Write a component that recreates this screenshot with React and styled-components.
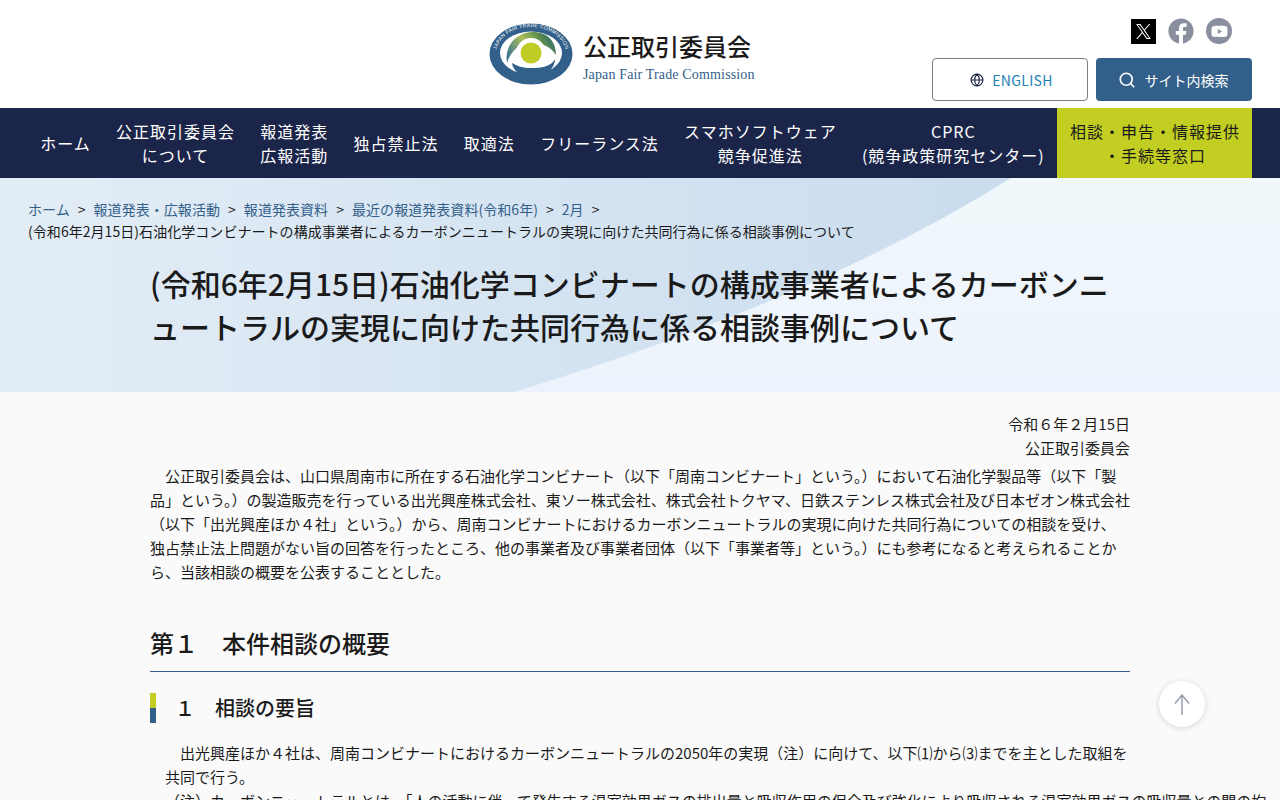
import React from "react";
import styled, { createGlobalStyle } from "styled-components";
import { FaFacebook, FaYoutube } from "react-icons/fa";
import { Globe, Search } from "lucide-react";

const GlobalStyle = createGlobalStyle`
  html, body { margin: 0; padding: 0; height: 800px; overflow: hidden; }
  body {
    background: #fafafa;
    color: #1a1a1a;
    font-family: "Noto Sans CJK JP", "Noto Sans", sans-serif;
  }
`;

const navItems = [
  ["ホーム"],
  ["公正取引委員会", "について"],
  ["報道発表", "広報活動"],
  ["独占禁止法"],
  ["取適法"],
  ["フリーランス法"],
  ["スマホソフトウェア", "競争促進法"],
  ["CPRC", "(競争政策研究センター)"],
];

const crumbs = ["ホーム", "報道発表・広報活動", "報道発表資料", "最近の報道発表資料(令和6年)", "2月"];

export default function App() {
  return (
    <Page>
      <GlobalStyle />
      <Header>
        <Logo>
          <svg width="84" height="62" viewBox="0 0 84 62">
            <defs>
              <linearGradient id="swirl" x1="0" y1="0.7" x2="1" y2="0.3">
                <stop offset="0" stopColor="#3f7590" />
                <stop offset="0.45" stopColor="#a9c058" />
                <stop offset="0.75" stopColor="#5f8f4e" />
                <stop offset="1" stopColor="#2f6a6c" />
              </linearGradient>
              <path id="logoArc" d="M6 33C8 14 24 4 42 4s34 10 36 29" />
            </defs>
            <ellipse cx="42" cy="31" rx="41.5" ry="30.5" fill="#33608a" />
            <ellipse cx="42" cy="30" rx="31" ry="21.5" fill="#fff" />
            <path d="M18 40C15 22 28 9 44 9c14 0 23 9 23 23-5-8-13-12-25-12-12 0-20 8-24 20z" fill="url(#swirl)" />
            <path d="M66 36c-4 8-14 9-24 9-8 0-14-2-19-5 1 6 5 10 11 13h18c8-3 14-9 14-17z" fill="#33608a" />
            <circle cx="42" cy="30" r="15" fill="#fff" />
            <circle cx="42" cy="30" r="10.5" fill="#bfcc28" />
            <LogoArcText>
              <textPath href="#logoArc" startOffset="50%" textAnchor="middle">JAPAN FAIR TRADE COMMISSION</textPath>
            </LogoArcText>
          </svg>
          <LogoText>
            <LogoTitle>公正取引委員会</LogoTitle>
            <LogoSub>Japan Fair Trade Commission</LogoSub>
          </LogoText>
        </Logo>
        <HeaderRight>
          <Socials>
            <XIcon>
              <svg width="15" height="15" viewBox="0 0 24 24" fill="#fff">
                <path d="M14.234 10.162 22.977 0h-2.072l-7.591 8.824L7.251 0H.258l9.168 13.343L.258 24H2.33l8.016-9.318L16.749 24h6.993zm-2.837 3.299-.929-1.329L3.076 1.56h3.182l5.965 8.532.929 1.329 7.754 11.09h-3.182z" />
              </svg>
            </XIcon>
            <FaFacebook size={26} color="#8a8fa0" />
            <RoundIcon><FaYoutube size={17} /></RoundIcon>
          </Socials>
          <Buttons>
            <EnglishButton>
              <Globe size={14} color="#1d2649" />
              ENGLISH
            </EnglishButton>
            <SearchButton>
              <Search size={18} strokeWidth={2.2} />
              サイト内検索
            </SearchButton>
          </Buttons>
        </HeaderRight>
      </Header>

      <Nav>
        {navItems.map((lines) => (
          <NavItem key={lines[0]}>
            {lines.map((l) => <span key={l}>{l}</span>)}
          </NavItem>
        ))}
        <NavAccent>
          <span>相談・申告・情報提供</span>
          <span>・手続等窓口</span>
        </NavAccent>
      </Nav>

      <Hero>
        <Breadcrumb>
          {crumbs.map((c) => (
            <React.Fragment key={c}>
              <Crumb>{c}</Crumb>
              <Sep>&gt;</Sep>
            </React.Fragment>
          ))}
          <Current>(令和6年2月15日)石油化学コンビナートの構成事業者によるカーボンニュートラルの実現に向けた共同行為に係る相談事例について</Current>
        </Breadcrumb>
        <Title>(令和6年2月15日)石油化学コンビナートの構成事業者によるカーボンニュートラルの実現に向けた共同行為に係る相談事例について</Title>
      </Hero>

      <Main>
        <RightLine>令和６年２月15日</RightLine>
        <RightLine>公正取引委員会</RightLine>
        <Lead>
          公正取引委員会は、山口県周南市に所在する石油化学コンビナート（以下「周南コンビナート」という。）において石油化学製品等（以下「製品」という。）の製造販売を行っている出光興産株式会社、東ソー株式会社、株式会社トクヤマ、日鉄ステンレス株式会社及び日本ゼオン株式会社（以下「出光興産ほか４社」という。）から、周南コンビナートにおけるカーボンニュートラルの実現に向けた共同行為についての相談を受け、<br />独占禁止法上問題がない旨の回答を行ったところ、他の事業者及び事業者団体（以下「事業者等」という。）にも参考になると考えられることから、当該相談の概要を公表することとした。
        </Lead>
        <H2>第１　本件相談の概要</H2>
        <H3>１　相談の要旨</H3>
        <Body>
          出光興産ほか４社は、周南コンビナートにおけるカーボンニュートラルの2050年の実現（注）に向けて、以下⑴から⑶までを主とした取組を共同で行う。
        </Body>
        <Note>（注）カーボンニュートラルとは、「人の活動に伴って発生する温室効果ガスの排出量と吸収作用の保全及び強化により吸収される温室効果ガスの吸収量との間の均</Note>
      </Main>

      <TopButton aria-label="ページ上部へ">
        <svg width="16" height="21" viewBox="0 0 16 21" fill="none" stroke="#9a9fb0" strokeWidth="1.5">
          <path d="M8 1V21M1 9.5L8 1l7 8.5" />
        </svg>
      </TopButton>
    </Page>
  );
}

const Page = styled.div`
  width: 1280px;
  height: 800px;
  overflow: hidden;
  position: relative;
`;

const Header = styled.header`
  height: 108px;
  background: #fff;
  box-sizing: border-box;
  padding: 0 28px 0 489px;
  display: flex;
  justify-content: space-between;
`;

const Logo = styled.div`
  display: flex;
  align-items: center;
  gap: 10px;
  height: 108px;
`;

const LogoArcText = styled.text`
  font-family: "Liberation Sans", sans-serif;
  font-size: 5px;
  letter-spacing: 0.3px;
  fill: #fff;
`;

const LogoText = styled.div`
  display: flex;
  flex-direction: column;
  padding-top: 4px;
`;

const LogoTitle = styled.div`
  font-size: 24px;
  line-height: 36px;
  font-weight: 500;
  color: #1a1a1a;
`;

const LogoSub = styled.div`
  font-family: "Liberation Serif", serif;
  font-size: 14px;
  line-height: 18px;
  margin-top: 2px;
  letter-spacing: 0.15px;
  color: #33608a;
`;

const HeaderRight = styled.div`
  display: flex;
  flex-direction: column;
  align-items: flex-end;
`;

const Socials = styled.div`
  display: flex;
  align-items: center;
  gap: 12px;
  height: 26px;
  margin-top: 18px;
  padding-right: 20px;
`;

const XIcon = styled.span`
  width: 25px;
  height: 25px;
  background: #000;
  display: flex;
  align-items: center;
  justify-content: center;
`;

const RoundIcon = styled.span`
  width: 26px;
  height: 26px;
  border-radius: 50%;
  background: #8a8fa0;
  color: #fff;
  display: flex;
  align-items: center;
  justify-content: center;
  overflow: hidden;
`;

const Buttons = styled.div`
  display: flex;
  gap: 8px;
  margin-top: 14px;
`;

const EnglishButton = styled.div`
  width: 156px;
  height: 43px;
  box-sizing: border-box;
  border: 1px solid #808080;
  border-radius: 4px;
  padding-left: 3px;
  background: #fff;
  color: #1f7fb5;
  font-size: 14px;
  letter-spacing: 0.35px;
  display: flex;
  align-items: center;
  justify-content: center;
  gap: 8px;
`;

const SearchButton = styled.div`
  width: 156px;
  height: 43px;
  box-sizing: border-box;
  padding-right: 2px;
  border-radius: 4px;
  background: #33608a;
  color: #fff;
  font-size: 14px;
  display: flex;
  align-items: center;
  justify-content: center;
  gap: 9px;
`;

const Nav = styled.nav`
  height: 70px;
  background: #1b2549;
  display: flex;
  padding-left: 27.5px;
`;

const NavItem = styled.div`
  flex: none;
  box-sizing: border-box;
  padding: 0 12.65px;
  color: #fff;
  font-size: 16px;
  line-height: 24px;
  letter-spacing: 1px;
  display: flex;
  flex-direction: column;
  align-items: center;
  justify-content: center;
  white-space: nowrap;
`;

const NavAccent = styled(NavItem)`
  width: 195px;
  padding: 0;
  background: #c2ce21;
  color: #1a1a1a;
`;

const Hero = styled.section`
  height: 214px;
  box-sizing: border-box;
  padding: 20px 28px 0;
  position: relative;
  background: linear-gradient(90deg, #e3edf6 0%, #c9dcee 80%);
  &::before {
    content: "";
    position: absolute;
    inset: 0;
    clip-path: path("M1011 0Q819 121 514 214L1280 214L1280 0Z");
    background: linear-gradient(180deg, #f1f8fb 0%, #edf3fc 100%);
  }
`;

const Breadcrumb = styled.div`
  position: relative;
  font-size: 14px;
  line-height: 22px;
  letter-spacing: 0.05px;
  color: #33608a;
`;

const Crumb = styled.span``;

const Sep = styled.span`
  color: #1a1a1a;
  margin: 0 8px;
`;

const Current = styled.div`
  color: #1a1a1a;
`;

const Title = styled.h1`
  position: relative;
  margin: 20px 122px 0;
  font-size: 30px;
  line-height: 43px;
  font-weight: 500;
  color: #1a1a1a;
`;

const Main = styled.main`
  box-sizing: border-box;
  padding: 20px 150px 0;
  font-size: 15px;
  line-height: 24px;
`;

const RightLine = styled.div`
  text-align: right;
`;

const Lead = styled.p`
  margin: 4px -0.5px 0 0;
  text-indent: 15px;
`;

const H2 = styled.h2`
  margin: 41px 0 0;
  font-size: 24px;
  line-height: 36px;
  font-weight: 500;
  padding-bottom: 10px;
  border-bottom: 1px solid #33608a;
`;

const H3 = styled.h3`
  margin: 21px 0 0;
  font-size: 20px;
  line-height: 30px;
  font-weight: 500;
  padding-left: 19px;
  border-left: 6px solid;
  border-image: linear-gradient(180deg, #c2ce21 50%, #33608a 50%) 1;
`;

const Body = styled.p`
  margin: 18px 0 0;
  padding-left: 15px;
  text-indent: 15px;
`;

const Note = styled.p`
  margin: 0;
  padding-left: 15px;
  white-space: nowrap;
`;

const TopButton = styled.div`
  position: absolute;
  left: 1159px;
  top: 681px;
  width: 46px;
  height: 46px;
  border-radius: 50%;
  background: #fff;
  box-shadow: 0 1px 6px rgba(0, 0, 0, 0.15);
  display: flex;
  align-items: center;
  justify-content: center;
`;
